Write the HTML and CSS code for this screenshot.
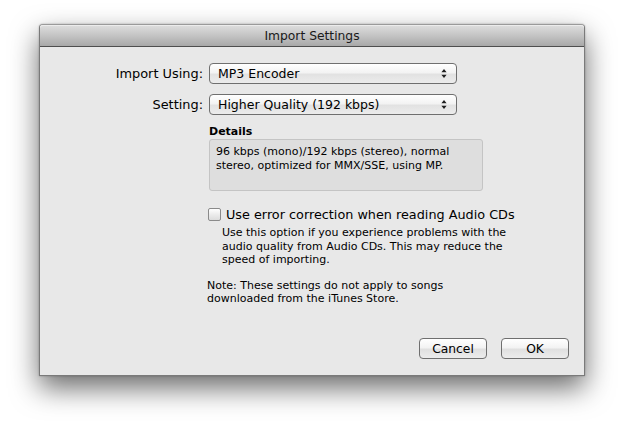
FILE: index.html
```html
<!DOCTYPE html>
<html>
<head>
<meta charset="utf-8">
<link rel="stylesheet" href="styles.css">
</head>
<body>
<div class="page">
  <div class="window">
    <div class="titlebar">Import Settings</div>
    <div class="content">
      <div class="form">
        <div class="label">Import Using:</div>
        <div class="popup"><span>MP3 Encoder</span>
          <svg class="arrows" width="6" height="11" viewBox="0 0 6 11"><path d="M3 1 L5.6 4.2 L0.4 4.2 Z M3 10 L5.6 6.8 L0.4 6.8 Z" fill="#1e1e1e"/></svg>
        </div>
        <div class="label">Setting:</div>
        <div class="popup"><span>Higher Quality (192 kbps)</span>
          <svg class="arrows" width="6" height="11" viewBox="0 0 6 11"><path d="M3 1 L5.6 4.2 L0.4 4.2 Z M3 10 L5.6 6.8 L0.4 6.8 Z" fill="#1e1e1e"/></svg>
        </div>
        <div></div>
        <div class="details">
          <div class="details-title">Details</div>
          <div class="details-box">96 kbps (mono)/192 kbps (stereo), normal stereo, optimized for MMX/SSE, using MP.</div>
        </div>
        <div></div>
        <div class="options">
          <label class="check"><span class="box"></span><span>Use error correction when reading Audio CDs</span></label>
          <div class="hint">Use this option if you experience problems with the audio quality from Audio CDs. This may reduce the speed of importing.</div>
          <div class="note">Note: These settings do not apply to songs downloaded from the iTunes Store.</div>
        </div>
      </div>
      <div class="buttons">
        <button class="btn">Cancel</button>
        <button class="btn">OK</button>
      </div>
    </div>
  </div>
</div>
</body>
</html>
```
FILE: styles.css
```css
html, body {
  margin: 0;
  padding: 0;
  background: #ffffff;
}
body {
  font-family: "DejaVu Sans", Verdana, sans-serif;
  color: #000;
}
.page {
  width: 624px;
  height: 430px;
  padding: 24px 0 0 39px;
  box-sizing: border-box;
}
.window {
  width: 546px;
  height: 352px;
  box-sizing: border-box;
  border: 1px solid #7a7a7a;
  border-top-color: #9a9a9a;
  border-radius: 4px 4px 0 0;
  background: #e8e8e8;
  box-shadow: 0 12px 28px rgba(0,0,0,0.58), 0 0 2px rgba(0,0,0,0.3);
  display: flex;
  flex-direction: column;
}
.titlebar {
  height: 21px;
  border-bottom: 1px solid #4e4e4e;
  border-radius: 3px 3px 0 0;
  background: linear-gradient(#dedede, #c4c4c4 50%, #a8a8a8);
  box-shadow: inset 0 1px 0 #ececec;
  text-align: center;
  font-size: 12.3px;
  line-height: 22px;
  color: #1a1a1a;
}
.content {
  flex: 1;
  padding: 16px 15px 16px 0;
  display: flex;
  flex-direction: column;
}
.form {
  display: grid;
  grid-template-columns: 163px 248px;
  column-gap: 6px;
  row-gap: 10px;
  align-items: center;
}
.label {
  text-align: right;
  font-size: 12.9px;
}
.popup {
  height: 21px;
  box-sizing: border-box;
  border: 1px solid #6f6f6f;
  border-radius: 4px;
  background: linear-gradient(#ffffff, #f3f3f3 45%, #e2e2e2 55%, #ececec);
  display: flex;
  align-items: center;
  justify-content: space-between;
  padding: 0 9px 0 8px;
  font-size: 12.5px;
}
.arrows {
  display: block;
}
.details {
  margin-top: 0;
}
.details-title {
  font-size: 11px;
  font-weight: bold;
  line-height: 13px;
  margin-bottom: 1px;
}
.details-box {
  width: 274px;
  height: 52px;
  box-sizing: border-box;
  border: 1px solid #c4c4c4;
  border-radius: 3px;
  background: #dedede;
  padding: 5px 6px;
  font-size: 11px;
  line-height: 14px;
}
.options {
  grid-column: 2 / span 1;
  width: 330px;
  margin-left: -1px;
  margin-top: 6px;
}
.check {
  display: flex;
  align-items: center;
  gap: 5px;
  font-size: 12.8px;
}
.box {
  width: 13px;
  height: 13px;
  box-sizing: border-box;
  border: 1px solid #8a8a8a;
  border-radius: 2px;
  background: linear-gradient(#ffffff, #ececec 50%, #dcdcdc);
}
.hint {
  margin: 4px 0 0 14px;
  width: 290px;
  font-size: 11px;
  line-height: 13.5px;
}
.note {
  margin-top: 12px;
  margin-left: -1px;
  font-size: 11px;
  line-height: 13px;
  width: 245px;
}
.buttons {
  margin-top: auto;
  display: flex;
  justify-content: flex-end;
  gap: 14px;
}
.btn {
  width: 68px;
  height: 21px;
  box-sizing: border-box;
  border: 1px solid #6f6f6f;
  border-radius: 4px;
  background: linear-gradient(#ffffff, #f3f3f3 45%, #e0e0e0 55%, #ececec);
  font-family: "DejaVu Sans", Verdana, sans-serif;
  font-size: 12.3px;
  color: #000;
  padding: 0;
}
```
